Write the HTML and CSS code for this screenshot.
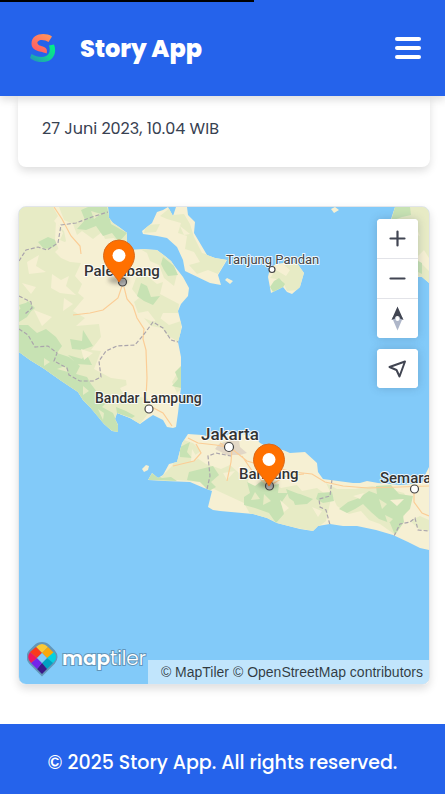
FILE: index.html
```html
<!DOCTYPE html>
<html lang="id">
<head>
<meta charset="utf-8">
<meta name="viewport" content="width=device-width, initial-scale=1">
<title>Story App</title>
<link rel="stylesheet" href="styles.css">
</head>
<body>
<header class="header">
  <div class="progress"></div>
  <a class="brand" href="#">
    <svg class="brand-logo" viewBox="0 0 26 28" aria-hidden="true">
      <defs>
        <linearGradient id="warm" x1="1" y1="0" x2="0.4" y2="1"><stop offset="0" stop-color="#ff9a5a"/><stop offset="1" stop-color="#ff5c66"/></linearGradient>
        <linearGradient id="cool" x1="1" y1="0" x2="0" y2="1"><stop offset="0" stop-color="#00f583"/><stop offset=".5" stop-color="#12cf96"/><stop offset="1" stop-color="#258cc0"/></linearGradient>
      </defs>
      <path d="M22 2.500 18.500 8C15 5.500 9 5 7.500 8 6.500 11 11 12 14 13 17 14 17.500 17 16.500 19.500 12 17 1.500 18 1.500 9.500 1.500-.5 15-2 22 2.500Z" fill="url(#warm)"/>
      <path d="M19 11.500 24 10.500C27 18 24 27 14 28 9 28.500 4 27.500 0 24L1.500 20C8 24 17 24 19 19 20 17 20 14 19 11.500Z" fill="url(#cool)"/>
    </svg>
    <span>Story App</span>
  </a>
  <button class="menu" type="button" aria-label="Menu"><span></span><span></span><span></span></button>
</header>

<main class="main">
  <section class="card"><time datetime="2023-06-27T10:04">27 Juni 2023, 10.04 WIB</time></section>

  <section class="map" aria-label="Peta">
    <svg class="map-canvas" viewBox="19 207 410 477" preserveAspectRatio="xMidYMid slice">
      <defs>
        <filter id="blur" x="-50%" y="-50%" width="200%" height="200%"><feGaussianBlur stdDeviation="2"/></filter>
        <clipPath id="land">
          <path d="M19 207H108L109 218 113 223 119 227 127 233 127 250 143 249 157 250 165 256 171 261 176 268 183 277 189 288 188 296 181 304 178 311 182 327 178 342 181 357 181 387 178 413 176 427 173 428 167 427 163 420 153 415 147 419 140 424 130 418 117 413 115 419 118 425 118 432 112 431 104 424 90 407 83 400 78 392 60 380 43 368 30 360 19 352Z"/>
          <path d="M163 210 168 207 173 216 176 207H187L188 215 195 222 194 233 207 255 215 258 227 260 218 275 221 285 210 283 185 271 183 260 177 247 167 238 157 236 143 234 142 231 152 223 157 212Z"/>
          <path d="M270 268 276 264 283 263H297L304 273 300 287 292 294 287 292 283 287 271 293 268 277Z"/>
          <path d="M395 207 391 219 397 240 412 277 422 277 429 283V207Z"/>
          <path d="M188 434 182 443 177 462 169 464 163 475 158 478 152 473 148 480 165 481 190 482 204 488 212 491 208 507 213 510 220 511 253 514 267 518 277 523 300 529 313 531 318 526 330 524 343 526 357 526 376 530 393 535 408 542 420 548 429 550V467L426 473 422 483 400 485 390 484 378 483 367 481 360 483 353 483 338 481 323 479 318 472 317 463 305 452 290 453 283 450 270 448 260 443 255 437 243 434 230 434 215 438 202 435Z"/>
          <path d="M142 469 146 465 149 466 148 470 144 472ZM331 209 335 207 339 210 334 213ZM225 280 227 278 233 281 230 284Z"/>
        </clipPath>
      </defs>
      <rect x="19" y="207" width="410" height="477" fill="#82caf9"/>
      <g clip-path="url(#land)">
        <rect x="19" y="207" width="410" height="477" fill="#f6f0d3"/>
        <g fill="#e7ebc5">
          <path d="M19 207H53L58 216 54 221 64 231 66 241 55 252 61 258 70 262 81 263 75 276 82 284 78 293 84 298 73 311 85 318 76 326 99 324 101 337 91 350 101 351 94 369 111 378 126 380 128 395 146 398 151 410 140 424 118 432 80 400 19 356Z"/>
          <path d="M59 207H108L128 232 127 249 119 245 114 238 105 239 102 232 93 239 82 231 77 235 73 224 64 220ZM140 249 157 250 172 261 177 274 174 286 164 278 159 265 150 261 147 253ZM136 278 147 276 157 284 163 282 160 294 179 304 178 313 163 313 158 324 148 311 138 313 134 302 139 298 132 289ZM144 318 153 322 160 318 169 325 181 321V334L178 342 166 334 162 328 151 326ZM181 367 172 382 177 393 182 388Z"/>
          <path d="M171 207 173 215 184 214 190 224 194 237 202 253 220 258 227 259 218 274 208 270 197 274 189 265 200 262 194 252 185 249 187 236 178 233 181 223 167 219 160 216ZM146 225 160 224 156 232 144 233Z"/>
          <path d="M284 265 297 263 304 273 299 290 287 291 282 280 270 278 276 270 286 276 290 270Z"/>
          <path d="M395 207H429V258L424 250 417 257 412 243 400 239 391 221ZM418 260 429 271V283L418 276Z"/>
          <path d="M184 440 193 443 201 451 194 456 206 464 221 469 230 465 239 473 251 473 247 484 260 487 272 482 281 488 297 485 302 491 317 488 325 494 332 492 330 503 326 521 313 531 270 523 250 514 244 503 218 491 200 482 177 480 152 480 149 476 160 478 172 466Z"/>
          <path d="M326 483 337 489 355 489 372 486 386 488 404 493 410 504 403 518 394 534 380 524 369 520 361 511 349 514 337 506ZM410 521 420 516 429 520V531L419 529Z"/>
        </g>
        <g fill="#c7e2b3">
          <path d="M81 210 88 207H107L111 224 127 233 119 242 112 233 103 236 96 226 86 230 77 229 85 220ZM38 242 48 237 58 241 54 247 44 249ZM19 310 28 301 34 307 27 317 19 322ZM19 325 28 325 37 333 46 329 56 337 62 346 57 353 69 357 80 366 76 374 87 377 91 384 100 396 108 401 102 407 113 413 118 425V434L100 424 80 399 53 380 19 355ZM70 339 82 341 83 330 93 346 82 350 72 349ZM68 355 82 359 86 353 92 365 77 364ZM19 305 29 302 35 308 24 317Z"/>
          <path d="M141 283 147 286 151 297 160 296 153 305 144 301 137 296ZM163 257 174 266 178 275 168 276 164 270 161 264ZM181 366 175 372 178 379 172 386 181 388ZM116 407 126 411 135 416 132 418 117 413Z"/>
          <path d="M274 281 279 278 285 284 282 289 273 292 270 287ZM395 207H410L411 215 402 217 391 221ZM416 260 422 263V274L416 271Z"/>
          <path d="M180 447 190 442 187 452 192 458 180 457ZM152 473 162 478 171 477 177 481 148 480ZM189 472 201 469 213 466 219 475 211 482 216 487 209 491 200 482 187 480ZM247 482 255 486 264 479 269 486 279 484 278 493 288 493 281 503 284 514 276 523 269 513 255 508 244 505 244 497 250 493ZM286 489 299 494 296 503 289 498ZM290 492 300 494 313 499 307 504 295 505ZM318 493 332 492 334 501 323 503 316 499ZM339 509 348 502 359 498 369 491 377 494 376 486 391 485 399 494 413 496 410 509 403 516 404 522 395 535 390 523 379 519 371 512 363 504 355 509 347 513Z"/>
        </g>
        <g fill="#f6f0d3">
          <path d="M52 274 61 280 69 276 66 286 76 295 60 293 51 288ZM27 262 39 255 36 266 46 272 29 274ZM64 298 73 304 63 311ZM34 310 52 317 42 326ZM56 221 63 233 60 240 67 243 60 252 55 240ZM81 349 93 353 84 360ZM22 283 36 287 31 294ZM120 388 127 385 135 391 126 398Z"/>
          <path d="M192 449 198 459 191 462ZM223 473 235 471 227 480ZM390 500 404 499 397 506ZM353 496 364 493 360 499ZM280 500 289 508 284 512ZM312 507 322 511 318 517ZM180 226 190 234 184 235ZM405 230 415 224 420 236Z"/>
        </g>
        <g fill="#e7ebc5">
          <path d="M44 358 50 362 44 366ZM57 369 65 366 68 372ZM83 386 89 391 83 395ZM98 409 104 413 103 420ZM91 211 101 214 94 219ZM264 494 271 501 263 505ZM255 492 260 499 251 500ZM379 499 387 504 382 509ZM385 515 393 519 388 524Z"/>
        </g>
        <path d="M219 444 230 440 239 441 240 447 247 453 240 455 227 455 215 449Z" fill="#e2d7c6"/>
        <g fill="none" stroke="#fbcd96" stroke-width="1.200">
          <path d="M54 207 62 219 71 236 80 246 81 254M122 286 118 298 103 310 90 313 73 315M124 287 127 299 133 306 137 318 144 329 143 339 146 350 147 378 146 398 150 406 163 413 172 426"/>
          <path d="M188 438 198 443 216 445 231 448 237 453 247 461 261 465 277 468 293 472 312 474 325 482 343 486 368 488 399 487 429 486M196 444 201 453 194 461 173 466M232 449 231 462 227 481M230 449 220 443M242 456 255 475 269 486 286 476 304 474M414 490 414 502 422 513 429 516"/>
        </g>
        <g fill="none" stroke="#aaa4ac" stroke-width="1.200" stroke-dasharray="4 2">
          <path d="M19 261 26 250 38 247 47 250 58 243 61 225 76 223 92 217 108 212M19 296 31 302 32 308 25 314M19 329 28 335 35 347 48 346 57 353 54 361 67 368 69 375 80 381 93 381 101 377 99 361 106 351 117 346 135 345 145 333 153 322 163 328 171 340 178 342M207 489 210 476 208 456 216 453 231 456M332 479 330 496 319 499 320 507 326 510 330 525M394 536 400 524 410 522 415 518 418 530 429 531"/>
        </g>
      </g>
      <g class="map-label">
        <text class="city" x="84" y="276">Palembang</text>
        <text class="town" x="226" y="264">Tanjung Pandan</text>
        <text class="city-small" x="95" y="403">Bandar Lampung</text>
        <text class="capital" x="201" y="440">Jakarta</text>
        <text class="city" x="239" y="479">Bandung</text>
        <text class="city" x="380" y="483">Semarang</text>
      </g>
      <g fill="#fff" stroke="#444" stroke-width="1.200">
        <circle cx="122.500" cy="282" r="4" fill="#bbb"/><circle cx="272" cy="269.500" r="3"/><circle cx="149" cy="409" r="4"/><circle cx="229" cy="447" r="4.500"/><circle cx="269.500" cy="486" r="4" fill="#bbb"/><circle cx="414.500" cy="489" r="4"/>
      </g>
      <g>
        <g transform="translate(119 282)"><ellipse cx="-1" cy="-2" rx="10" ry="4" fill="#333" opacity=".35" filter="url(#blur)"/><path d="M0 0C-5-9-15.500-15-15.500-26.500A15.500 15.500 0 0 1 15.500-26.500C15.500-15 5-9 0 0Z" fill="#ff7000" stroke="#d9691a"/><circle cy="-26.500" r="6.500" fill="#fff"/></g>
        <g transform="translate(269 486)"><ellipse cx="-1" cy="-2" rx="10" ry="4" fill="#333" opacity=".35" filter="url(#blur)"/><path d="M0 0C-5-9-15.500-15-15.500-26.500A15.500 15.500 0 0 1 15.500-26.500C15.500-15 5-9 0 0Z" fill="#ff7000" stroke="#d9691a"/><circle cy="-26.500" r="6.500" fill="#fff"/></g>
      </g>
    </svg>

    <div class="controls">
      <div class="control-group">
        <button type="button" aria-label="Zoom in"><svg viewBox="0 0 41 39"><path d="M20.500 12.500V26.500M13.500 19.500H27.500" fill="none" stroke="#414552" stroke-width="2.200" stroke-linecap="round"/></svg></button>
        <button type="button" aria-label="Zoom out"><svg viewBox="0 0 41 39"><path d="M13.500 19.500H27.500" fill="none" stroke="#414552" stroke-width="2.200" stroke-linecap="round"/></svg></button>
        <button type="button" aria-label="Reset bearing"><svg viewBox="0 0 41 39"><path d="M20.500 31.500 15 18.500H26Z" fill="#aeb6c9"/><path d="M20.500 7.500 26.500 21 23 19.500A2.500 2.500 0 0 0 18 19.500L14.500 21Z" fill="#414552"/><circle cx="20.500" cy="20" r="2" fill="#fff"/></svg></button>
      </div>
      <div class="control-group">
        <button type="button" aria-label="Find my location"><svg viewBox="0 0 41 39"><path d="M28 12.500 22.500 27.500 19.500 21 12.500 18Z" fill="none" stroke="#414552" stroke-width="2" stroke-linejoin="round"/></svg></button>
      </div>
    </div>

    <a class="maptiler" href="#" aria-label="MapTiler">
      <svg viewBox="0 0 120 38">
        <path d="M15 2Q19 2 22 5L27 10Q32 16 27 22L15 34 3 22Q-2 16 3 10L8 5Q11 2 15 2Z" fill="#6396b9" stroke="#6396b9" stroke-width="2"/>
        <path d="M15 3Q18 3 21 6L15 12 9 6Q12 3 15 3Z" fill="#fbc935"/>
        <path d="M21 6 27 12 21 18 15 12Z" fill="#f9a80b"/><path d="M27 11Q31 16 27 21L26 22 20 17Z" fill="#05d0df"/>
        <path d="M20 17 26 22 20 28 15 22Z" fill="#00a1c2"/><path d="M15 22 20 28 15 33 10 28Z" fill="#3b1a89"/><path d="M10 17 15 22 10 28 4 22Z" fill="#7424eb"/>
        <path d="M3 11 10 17 4 22Q-1 17 3 11Z" fill="#f1175d"/><path d="M9 6 15 12 10 17 3 11Z" fill="#fb3a1b"/><path d="M15 12 20 17 15 22 10 17Z" fill="#82caf9"/>
        <text class="wordmark" x="35" y="24">map<tspan class="wordmark-light">tiler</tspan></text>
      </svg>
    </a>
    <div class="attribution"><a href="#">© MapTiler</a> <a href="#">© OpenStreetMap contributors</a></div>
  </section>
</main>

<footer class="footer">© 2025 Story App. All rights reserved.</footer>
</body>
</html>
```
FILE: styles.css
```css
* { box-sizing: border-box; }
body {
  margin: 0;
  background: #fff;
  color: #374151;
  font-family: Poppins, Inter, "Open Sans", sans-serif;
  font-size: 16px;
}
a { color: inherit; text-decoration: none; }
.header {
  position: sticky;
  top: 0;
  z-index: 5;
  display: flex;
  align-items: center;
  justify-content: space-between;
  height: 96px;
  padding: 0 24px 0 30px;
  background: #2563eb;
  box-shadow: 0 4px 8px rgba(0, 0, 0, .13);
  color: #fff;
}
.progress {
  position: absolute;
  top: 0;
  left: 0;
  width: 57%;
  height: 2px;
  background: #000;
}
.brand { display: flex; align-items: center; gap: 24px; font-size: 24px; font-weight: 800; }
.brand-logo { width: 26px; height: 28px; }
.menu {
  display: flex;
  flex-direction: column;
  gap: 5px;
  padding: 0;
  border: 0;
  background: none;
}
.menu span { width: 26px; height: 4px; border-radius: 2px; background: #fff; }
.main { padding: 0 15px 39px 18px; }
.card {
  padding: 21px 24px 26px;
  border-radius: 0 0 8px 8px;
  background: #fff;
  box-shadow: 0 4px 8px rgba(0, 0, 0, .13);
  line-height: 24px;
}
.map {
  position: relative;
  overflow: hidden;
  margin-top: 39px;
  border: 1px solid #e2e5e9;
  border-radius: 8px;
  box-shadow: 0 4px 8px rgba(0, 0, 0, .13);
}
.map-canvas { display: block; width: 100%; height: 477px; }
.map-label text {
  fill: #333;
  stroke: rgba(255, 255, 255, .85);
  stroke-width: 2px;
  stroke-linejoin: round;
  paint-order: stroke;
  font-family: Roboto, sans-serif;
  font-weight: 500;
}
.map-label .town { fill: #444; font-size: 13px; font-weight: 400; }
.map-label .city { font-size: 15px; }
.map-label .city-small { font-size: 14px; }
.map-label .capital { font-size: 17px; }
.controls {
  position: absolute;
  top: 12px;
  right: 11px;
  display: grid;
  gap: 11px;
}
.control-group {
  overflow: hidden;
  border-radius: 4px;
  background: #fff;
  box-shadow: 0 0 8px rgba(50, 70, 100, .25);
}
.control-group button {
  display: block;
  box-sizing: content-box;
  width: 41px;
  height: 39px;
  padding: 0;
  border: 0;
  background: #fff;
}
.control-group button + button { border-top: 1px solid #e2e3e8; }
.control-group svg { display: block; width: 41px; height: 39px; }
.maptiler { position: absolute; bottom: 5px; left: 8px; }
.maptiler svg { display: block; width: 120px; height: 38px; }
.wordmark {
  fill: #fff;
  stroke: #6396b9;
  stroke-width: 2px;
  paint-order: stroke;
  font: 600 20px Poppins, "Open Sans", sans-serif;
}
.wordmark-light { font-weight: 300; }
.attribution {
  position: absolute;
  right: 0;
  bottom: 0;
  padding: 1px 6px 0 13px;
  background: rgba(255, 255, 255, .5);
  color: rgba(0, 0, 0, .75);
  font: 14px/23px "Liberation Sans", Arial, sans-serif;
}
.footer {
  padding: 25px 0 21px;
  background: #2563eb;
  color: #fff;
  font-size: 19px;
  font-weight: 500;
  line-height: 28px;
  text-align: center;
}
```
